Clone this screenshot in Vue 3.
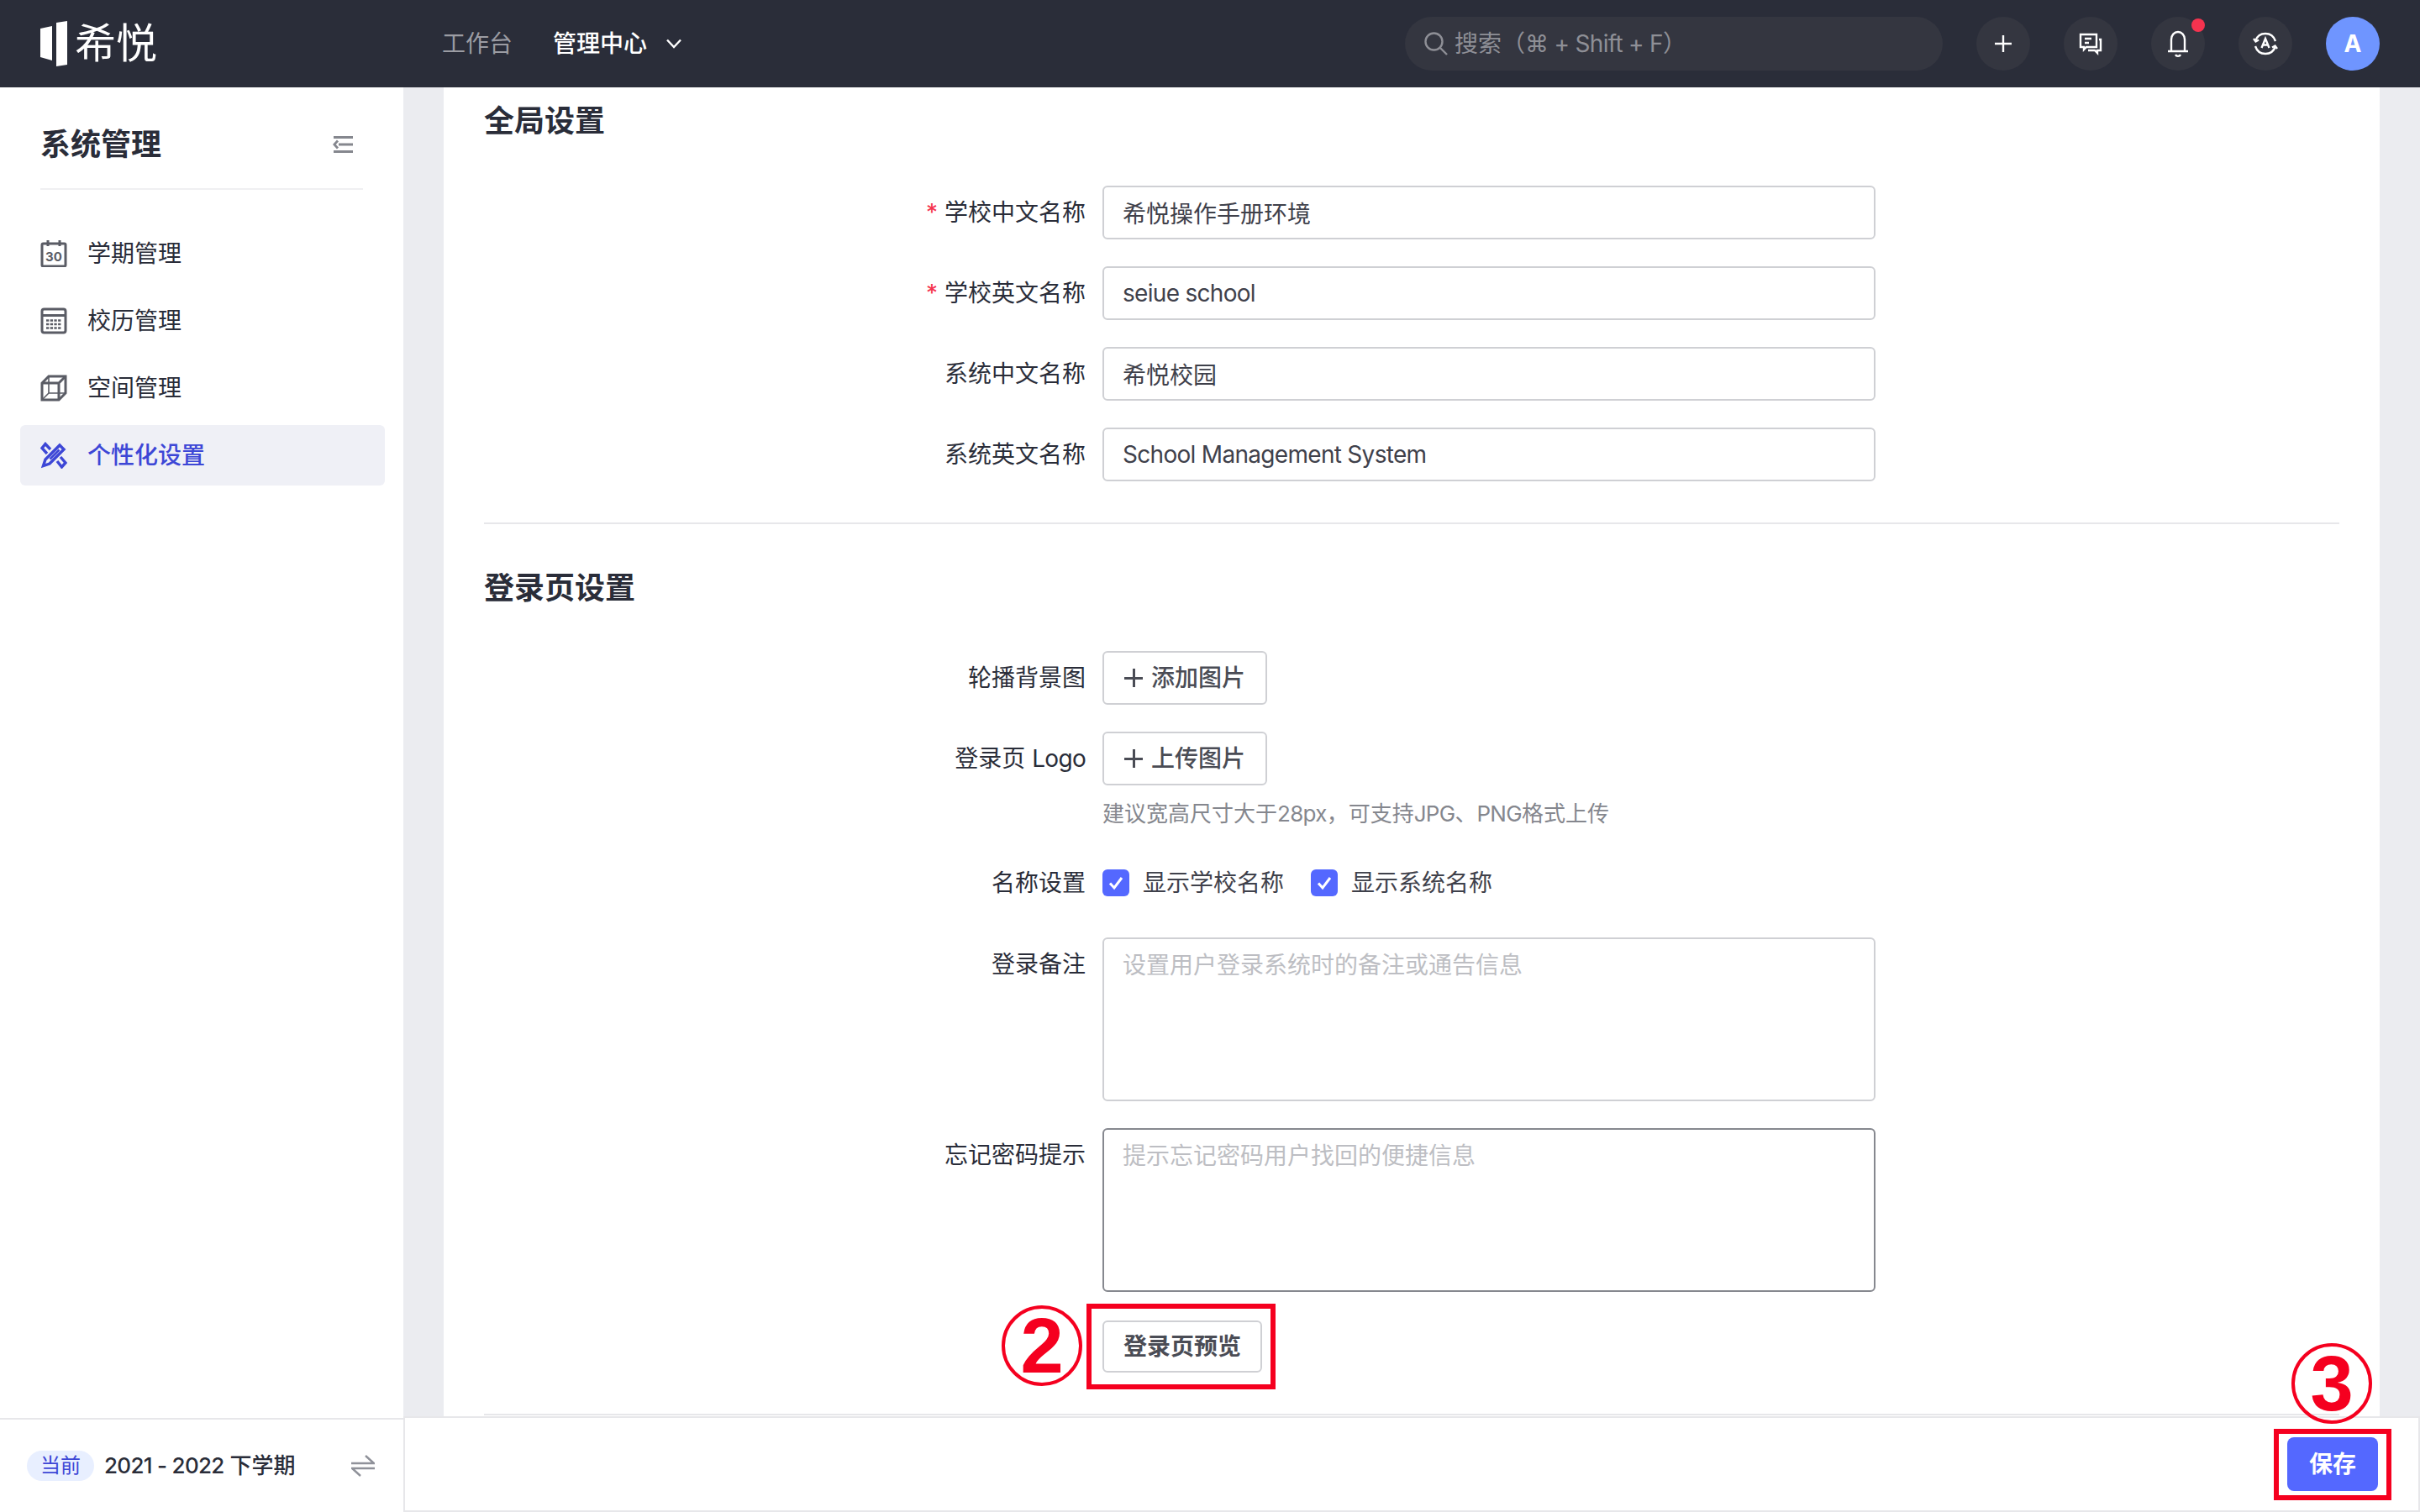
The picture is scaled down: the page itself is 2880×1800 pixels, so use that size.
<script setup>
const menu = [
  { key: 'term', label: '学期管理' },
  { key: 'calendar', label: '校历管理' },
  { key: 'space', label: '空间管理' },
  { key: 'custom', label: '个性化设置', active: true },
]
const globalFields = [
  { label: '学校中文名称', value: '希悦操作手册环境', required: true },
  { label: '学校英文名称', value: 'seiue school', required: true, latin: true },
  { label: '系统中文名称', value: '希悦校园' },
  { label: '系统英文名称', value: 'School Management System', latin: true },
]
</script>

<template>
  <div class="page">
    <header class="topbar">
      <div class="logo">
        <svg class="logo-mark" width="34" height="54" viewBox="0 0 34 54" fill="#fff">
          <path d="M0 9 14 6V47L0 43Z" />
          <path d="M19 2 32 0V52L19 54Z" />
        </svg>
        <span class="logo-text">希悦</span>
      </div>
      <nav class="nav">
        <span class="nav-item">工作台</span>
        <span class="nav-item current">管理中心</span>
        <svg width="20" height="12" viewBox="0 0 20 12" fill="none" stroke="#fff" stroke-width="2.4">
          <path d="M2 1.500 10 10 18 1.500" />
        </svg>
      </nav>
      <div class="search">
        <svg width="30" height="30" viewBox="0 0 30 30" fill="none" stroke="#8e8f96" stroke-width="2.400">
          <circle cx="12.500" cy="12.500" r="10" />
          <path d="M20 20 28 28" />
        </svg>
        <span>搜索（<span class="latin">⌘ + Shift + F</span>）</span>
      </div>
      <div class="tools">
        <span class="tool">
          <svg width="24" height="24" viewBox="0 0 24 24" stroke="#fff" stroke-width="2.400"><path d="M12 2V22M2 12H22" /></svg>
        </span>
        <span class="tool">
          <svg width="28" height="28" viewBox="0 0 28 28" fill="none" stroke="#fff" stroke-width="2.400">
            <path d="M2 3H21V18H9L6 21V18H2Z" />
            <path d="M24 9H26V22H22V25L19 22H11" />
            <path d="M7 8H15M7 13H12" />
          </svg>
        </span>
        <span class="tool bell">
          <svg width="30" height="34" viewBox="0 0 30 34" fill="none" stroke="#fff" stroke-width="2.400">
            <path d="M7 25V12C7 7 10.500 3 15 3S23 7 23 12V25" />
            <path d="M3 26H27M12 30C13 32.500 17 32.500 18 30" />
          </svg>
          <i class="dot"></i>
        </span>
        <span class="tool">
          <svg width="30" height="30" viewBox="0 0 30 30" fill="none" stroke="#fff" stroke-width="2.400">
            <path d="M3 12C5 6 9.500 3 15 3S25 6 27 12M27 18C25 24 20.500 27 15 27S5 24 3 18" />
            <path d="M10.500 20 15 9 19.500 20M12 16.500H18" />
            <path d="M1 9 3.500 12.500 7 10.500M29 21 26.500 17.500 23 19.500" />
          </svg>
        </span>
        <span class="tool avatar">A</span>
      </div>
    </header>

    <div class="body">
      <aside class="sidebar">
        <div class="side-head">
          <h2>系统管理</h2>
          <svg width="24" height="20" viewBox="0 0 24 20" fill="none" stroke="#85878e" stroke-width="2.800">
            <path d="M1 1.500H24M7 10H24M1 18.500H24M6 5.500 1.800 10 6 14.500" />
          </svg>
        </div>
        <ul class="menu">
          <li v-for="item in menu" :key="item.key" class="menu-item" :class="{ active: item.active }">
            <svg class="menu-icon" width="32" height="32" viewBox="0 0 32 32" fill="none" stroke="currentColor" stroke-width="3">
              <template v-if="item.key === 'term'">
                <rect x="2" y="4" width="28" height="27" rx="1.500" />
                <path d="M9 0V7M23 0V7" />
                <text x="16" y="25" text-anchor="middle" class="icon-num">30</text>
              </template>
              <template v-else-if="item.key === 'calendar'">
                <rect x="2" y="2" width="28" height="28" rx="2.500" />
                <path d="M2 9.500H30" />
                <path d="M7 15.500H25M7 20H25M7 24.500H25" stroke-width="2.400" stroke-dasharray="3.300 1.400" />
              </template>
              <template v-else-if="item.key === 'space'">
                <path d="M10 2H30V22L22 30H2V10Z" />
                <path d="M2 10H22V30M22 10 30 2" />
                <path d="M10 2V22H30M10 22 2 30" stroke-width="1.600" />
              </template>
              <template v-else>
                <path d="M6 21 23 4 28 9 11 26 3.500 28.500Z" stroke-width="3.400" />
                <path d="M11.500 20.500 22.500 9.500" stroke-width="2.600" />
                <path d="M12 9 6 2.500 2 7.500 8 14M20 23 25.500 30 30 25 24 18" stroke-width="3.400" />
              </template>
            </svg>
            <span>{{ item.label }}</span>
          </li>
        </ul>
        <div class="term">
          <span class="badge">当前</span>
          <span class="term-name"><span class="latin">2021 - 2022</span> 下学期</span>
          <svg width="28" height="26" viewBox="0 0 28 26" fill="none" stroke="#8f9199" stroke-width="2.400">
            <path d="M0 10H27L17 1M28 16H1L11 25" />
          </svg>
        </div>
      </aside>

      <main class="main">
        <section class="card">
          <h3 class="section-title first">全局设置</h3>
          <div class="form">
            <div v-for="field in globalFields" :key="field.label" class="row">
              <label class="label"><em v-if="field.required">*</em>{{ field.label }}</label>
              <input class="input" :class="{ latin: field.latin }" :value="field.value" readonly />
            </div>
          </div>
          <hr class="rule" />
          <h3 class="section-title second">登录页设置</h3>
          <div class="form">
            <div class="row">
              <label class="label">轮播背景图</label>
              <button class="btn"><span class="plus"></span>添加图片</button>
            </div>
            <div class="row">
              <label class="label">登录页 <span class="latin">Logo</span></label>
              <button class="btn"><span class="plus"></span>上传图片</button>
            </div>
          </div>
          <p class="hint">建议宽高尺寸大于<span class="latin">28px</span>，可支持<span class="latin">JPG</span>、<span class="latin">PNG</span>格式上传</p>
          <div class="row check-row">
            <label class="label">名称设置</label>
            <span class="check">
              <svg width="32" height="32" viewBox="0 0 32 32"><rect width="32" height="32" rx="6" fill="#5468ff" /><path d="M9 16.500 14 22 23 10" fill="none" stroke="#fff" stroke-width="3" /></svg>
              显示学校名称
            </span>
            <span class="check">
              <svg width="32" height="32" viewBox="0 0 32 32"><rect width="32" height="32" rx="6" fill="#5468ff" /><path d="M9 16.500 14 22 23 10" fill="none" stroke="#fff" stroke-width="3" /></svg>
              显示系统名称
            </span>
          </div>
          <div class="row area-row">
            <label class="label">登录备注</label>
            <textarea class="area" placeholder="设置用户登录系统时的备注或通告信息" readonly></textarea>
          </div>
          <div class="row area-row tight">
            <label class="label">忘记密码提示</label>
            <textarea class="area focus" placeholder="提示忘记密码用户找回的便捷信息" readonly></textarea>
          </div>
          <div class="preview-row">
            <span class="preview-wrap">
              <span class="step step-two">2</span>
              <button class="btn preview">登录页预览</button>
              <i class="mark"></i>
            </span>
          </div>
          <hr class="rule end" />
        </section>
        <footer class="actions">
          <span class="save-wrap">
            <span class="step step-three">3</span>
            <button class="save">保存</button>
            <i class="mark"></i>
          </span>
        </footer>
      </main>
    </div>
  </div>
</template>

<style>
html, body { margin: 0; background: #ebecf0; }
</style>

<style scoped>
* { box-sizing: border-box; }
.page {
  width: 2880px;
  height: 1800px;
  display: flex;
  flex-direction: column;
  overflow: hidden;
  color: #2a2d39;
  font: 28px/40px Inter, "Noto Sans CJK SC", sans-serif;
}
.latin { letter-spacing: -0.7px; }
.topbar {
  height: 104px;
  flex: none;
  display: flex;
  align-items: center;
  background: #2a2d39;
  color: #fff;
}
.logo { width: 526px; padding-left: 48px; display: flex; align-items: center; gap: 7px; }
.logo-text { font-size: 49px; font-weight: 400; line-height: 56px; }
.nav { width: 1146px; display: flex; align-items: center; }
.nav-item { color: #9b9ca3; margin-right: 48px; }
.nav-item.current { color: #fff; font-weight: 500; margin-right: 22px; }
.search {
  width: 640px;
  height: 64px;
  display: flex;
  align-items: center;
  gap: 7px;
  padding-left: 22px;
  border-radius: 32px;
  background: #343640;
  color: #8e8f96;
}
.tools { display: flex; margin-left: 40px; gap: 40px; }
.tool {
  position: relative;
  width: 64px;
  height: 64px;
  display: flex;
  align-items: center;
  justify-content: center;
  border-radius: 50%;
  background: #343640;
}
.dot {
  position: absolute;
  top: 2px;
  right: 0;
  width: 16px;
  height: 16px;
  border-radius: 50%;
  background: #f5334f;
}
.avatar { background: #6f95ff; font-weight: 700; font-size: 28px; }
.body { flex: 1; display: flex; min-height: 0; }
.sidebar {
  width: 480px;
  flex: none;
  display: flex;
  flex-direction: column;
  background: #fff;
}
.side-head {
  height: 122px;
  margin: 0 48px;
  padding: 16px 12px 0 0;
  display: flex;
  align-items: center;
  justify-content: space-between;
  border-bottom: 2px solid #eff0f2;
}
.side-head h2 { margin: 0; font-size: 36px; font-weight: 700; line-height: 48px; }
.menu { margin: 40px 0 0; padding: 0; list-style: none; display: flex; flex-direction: column; gap: 8px; }
.menu-item {
  width: 434px;
  height: 72px;
  margin-left: 24px;
  padding-left: 24px;
  display: flex;
  align-items: center;
  gap: 24px;
  border-radius: 6px;
  color: #5a5c65;
}
.menu-item span { color: #2a2d39; }
.menu-item.active { background: #eff0f6; color: #3d47d6; }
.menu-item.active span { color: #3d47d6; font-weight: 500; }
.icon-num { font: 700 15px Inter, sans-serif; fill: currentColor; stroke: none; }
.term {
  margin-top: auto;
  height: 112px;
  padding: 0 34px 0 32px;
  display: flex;
  align-items: center;
  border-top: 2px solid #e7e7ea;
}
.badge {
  width: 80px;
  height: 36px;
  border-radius: 18px;
  background: #e8efff;
  color: #3d47d6;
  font-size: 24px;
  line-height: 36px;
  text-align: center;
}
.term-name { margin-left: 12px; font-size: 26px; font-weight: 500; flex: 1; }
.main { flex: 1; min-width: 0; display: flex; flex-direction: column; }
.card {
  flex: 1;
  min-height: 0;
  width: 2304px;
  margin-left: 48px;
  padding: 20px 48px 0;
  background: #fff;
}
.section-title { margin: 0; font-size: 36px; font-weight: 700; line-height: 40px; }
.section-title.first { margin-bottom: 57px; }
.section-title.second { margin-bottom: 55px; }
.form { display: flex; flex-direction: column; gap: 32px; }
.row { display: flex; align-items: center; }
.label { width: 716px; margin-right: 20px; flex: none; text-align: right; line-height: 64px; }
.label em { color: #f5334f; font-style: normal; margin-right: 8px; }
.input, .area {
  width: 920px;
  border: 2px solid #cfd0d4;
  border-radius: 6px;
  background: #fff;
  color: #3f414b;
  font: inherit;
  outline: none;
}
.input { height: 64px; padding: 0 22px; }
.rule { margin: 49px 0 56px; border: 0; border-top: 2px solid #e7e7ea; }
.rule.end { margin: 49px 0 0; }
.btn {
  width: 196px;
  height: 64px;
  padding: 0 0 0 24px;
  display: inline-flex;
  align-items: center;
  border: 2px solid #cfd0d4;
  border-radius: 6px;
  background: #fff;
  color: #4a4c55;
  font: inherit;
  font-weight: 500;
}
.plus {
  width: 22px;
  height: 22px;
  margin-right: 10px;
  background: linear-gradient(#4a4c55, #4a4c55) center / 100% 3px no-repeat, linear-gradient(#4a4c55, #4a4c55) center / 3px 100% no-repeat;
}
.hint { margin: 14px 0 0 736px; color: #85878e; font-size: 26px; line-height: 40px; }
.check-row { margin-top: 30px; height: 64px; }
.check { display: inline-flex; align-items: center; gap: 16px; margin-right: 32px; color: #3f414b; }
.area-row { align-items: flex-start; margin-top: 33px; }
.area-row.tight { margin-top: 32px; }
.area { height: 195px; padding: 11px 22px; resize: none; display: block; }
.area::placeholder { color: #bdbec3; opacity: 1; }
.area.focus { border-color: #86888f; }
.preview-row { padding: 34px 0 0 736px; }
.preview-wrap, .save-wrap { position: relative; display: inline-block; vertical-align: top; }
.preview { width: 190px; height: 62px; padding: 0; justify-content: center; font-weight: 600; }
.mark { position: absolute; border: 6px solid #f5001f; pointer-events: none; }
.preview-wrap .mark { top: -20px; bottom: -20px; left: -19px; right: -16px; }
.save-wrap .mark { top: -10px; bottom: -11px; left: -16px; right: -16px; }
.step {
  position: absolute;
  width: 96px;
  height: 96px;
  display: flex;
  align-items: center;
  justify-content: center;
  border: 4px solid #f5001f;
  border-radius: 50%;
  color: #f5001f;
  font: 700 92px/1 "Liberation Sans", sans-serif;
}
.step-two { left: -120px; top: -18px; }
.step-three { left: 5px; top: -112px; }
.actions {
  height: 114px;
  flex: none;
  position: relative;
  padding: 23px 48px 0 0;
  display: flex;
  justify-content: flex-end;
  align-items: flex-start;
  background: #fff;
  border: 2px solid #e7e7ea;
}
.save {
  display: block;
  width: 108px;
  height: 64px;
  border: 0;
  border-radius: 8px;
  background: #5468ff;
  color: #fff;
  font: inherit;
  font-weight: 600;
}
</style>
